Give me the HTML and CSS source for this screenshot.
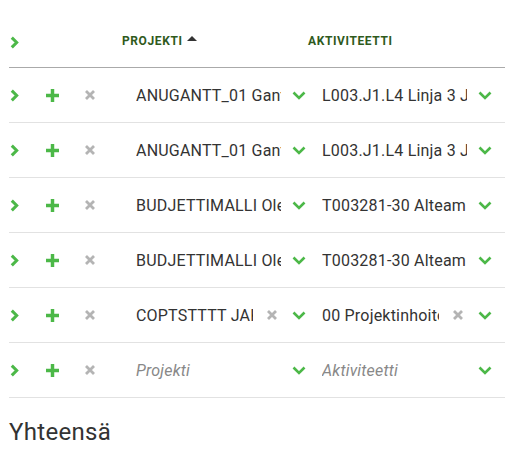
FILE: index.html
```html
<!DOCTYPE html>
<html lang="fi">
<head>
    <meta charset="UTF-8">
    <meta name="viewport" content="width=device-width, initial-scale=1.0">
    <title>Tuntikirjaus</title>
    <link rel="stylesheet" href="styles.css">
</head>
<body>

<div class="grid-wrap">
    <div class="row head">
        <div class="cell expand"><svg class="ico-right" viewBox="0 0 8 12"><path d="M1.5 1.5 L6 6 L1.5 10.5"/></svg></div>
        <div class="cell"></div>
        <div class="cell"></div>
        <div class="cell th">PROJEKTI <span class="caret"></span></div>
        <div class="cell th">AKTIVITEETTI</div>
        <div class="cell th"></div>
    </div>

    <div class="row">
        <div class="cell expand"><svg class="ico-right" viewBox="0 0 8 12"><path d="M1.5 1.5 L6 6 L1.5 10.5"/></svg></div>
        <div class="cell add"><svg class="ico-plus" viewBox="0 0 12 12"><path d="M6 0 V12 M0 6 H12"/></svg></div>
        <div class="cell del"><svg class="ico-x" viewBox="0 0 10 10"><path d="M1 1 L9 9 M9 1 L1 9"/></svg></div>
        <div class="cell sel"><span class="val">ANUGANTT_01 Gantt</span><svg class="ico-down" viewBox="0 0 14 9"><path d="M1.5 1.5 L7 7 L12.5 1.5"/></svg></div>
        <div class="cell sel"><span class="val">L003.J1.L4 Linja 3 Jakso</span><svg class="ico-down" viewBox="0 0 14 9"><path d="M1.5 1.5 L7 7 L12.5 1.5"/></svg></div>
        <div class="cell"></div>
    </div>

    <div class="row">
        <div class="cell expand"><svg class="ico-right" viewBox="0 0 8 12"><path d="M1.5 1.5 L6 6 L1.5 10.5"/></svg></div>
        <div class="cell add"><svg class="ico-plus" viewBox="0 0 12 12"><path d="M6 0 V12 M0 6 H12"/></svg></div>
        <div class="cell del"><svg class="ico-x" viewBox="0 0 10 10"><path d="M1 1 L9 9 M9 1 L1 9"/></svg></div>
        <div class="cell sel"><span class="val">ANUGANTT_01 Gantt</span><svg class="ico-down" viewBox="0 0 14 9"><path d="M1.5 1.5 L7 7 L12.5 1.5"/></svg></div>
        <div class="cell sel"><span class="val">L003.J1.L4 Linja 3 Jakso</span><svg class="ico-down" viewBox="0 0 14 9"><path d="M1.5 1.5 L7 7 L12.5 1.5"/></svg></div>
        <div class="cell"></div>
    </div>

    <div class="row">
        <div class="cell expand"><svg class="ico-right" viewBox="0 0 8 12"><path d="M1.5 1.5 L6 6 L1.5 10.5"/></svg></div>
        <div class="cell add"><svg class="ico-plus" viewBox="0 0 12 12"><path d="M6 0 V12 M0 6 H12"/></svg></div>
        <div class="cell del"><svg class="ico-x" viewBox="0 0 10 10"><path d="M1 1 L9 9 M9 1 L1 9"/></svg></div>
        <div class="cell sel"><span class="val">BUDJETTIMALLI Oletus</span><svg class="ico-down" viewBox="0 0 14 9"><path d="M1.5 1.5 L7 7 L12.5 1.5"/></svg></div>
        <div class="cell sel"><span class="val">T003281-30 Alteam Oy</span><svg class="ico-down" viewBox="0 0 14 9"><path d="M1.5 1.5 L7 7 L12.5 1.5"/></svg></div>
        <div class="cell"></div>
    </div>

    <div class="row">
        <div class="cell expand"><svg class="ico-right" viewBox="0 0 8 12"><path d="M1.5 1.5 L6 6 L1.5 10.5"/></svg></div>
        <div class="cell add"><svg class="ico-plus" viewBox="0 0 12 12"><path d="M6 0 V12 M0 6 H12"/></svg></div>
        <div class="cell del"><svg class="ico-x" viewBox="0 0 10 10"><path d="M1 1 L9 9 M9 1 L1 9"/></svg></div>
        <div class="cell sel"><span class="val">BUDJETTIMALLI Oletus</span><svg class="ico-down" viewBox="0 0 14 9"><path d="M1.5 1.5 L7 7 L12.5 1.5"/></svg></div>
        <div class="cell sel"><span class="val">T003281-30 Alteam Oy</span><svg class="ico-down" viewBox="0 0 14 9"><path d="M1.5 1.5 L7 7 L12.5 1.5"/></svg></div>
        <div class="cell"></div>
    </div>

    <div class="row">
        <div class="cell expand"><svg class="ico-right" viewBox="0 0 8 12"><path d="M1.5 1.5 L6 6 L1.5 10.5"/></svg></div>
        <div class="cell add"><svg class="ico-plus" viewBox="0 0 12 12"><path d="M6 0 V12 M0 6 H12"/></svg></div>
        <div class="cell del"><svg class="ico-x" viewBox="0 0 10 10"><path d="M1 1 L9 9 M9 1 L1 9"/></svg></div>
        <div class="cell sel"><span class="val">COPTSTTTT JAKSO</span><svg class="ico-x clear" viewBox="0 0 10 10"><path d="M1 1 L9 9 M9 1 L1 9"/></svg><svg class="ico-down" viewBox="0 0 14 9"><path d="M1.5 1.5 L7 7 L12.5 1.5"/></svg></div>
        <div class="cell sel"><span class="val">00 Projektinhoito</span><svg class="ico-x clear" viewBox="0 0 10 10"><path d="M1 1 L9 9 M9 1 L1 9"/></svg><svg class="ico-down" viewBox="0 0 14 9"><path d="M1.5 1.5 L7 7 L12.5 1.5"/></svg></div>
        <div class="cell"></div>
    </div>

    <div class="row">
        <div class="cell expand"><svg class="ico-right" viewBox="0 0 8 12"><path d="M1.5 1.5 L6 6 L1.5 10.5"/></svg></div>
        <div class="cell add"><svg class="ico-plus" viewBox="0 0 12 12"><path d="M6 0 V12 M0 6 H12"/></svg></div>
        <div class="cell del"><svg class="ico-x" viewBox="0 0 10 10"><path d="M1 1 L9 9 M9 1 L1 9"/></svg></div>
        <div class="cell sel"><span class="val ph">Projekti</span><svg class="ico-down" viewBox="0 0 14 9"><path d="M1.5 1.5 L7 7 L12.5 1.5"/></svg></div>
        <div class="cell sel"><span class="val ph">Aktiviteetti</span><svg class="ico-down" viewBox="0 0 14 9"><path d="M1.5 1.5 L7 7 L12.5 1.5"/></svg></div>
        <div class="cell"></div>
    </div>
</div>

<h2 class="total">Yhteensä</h2>

</body>
</html>
```

FILE: styles.css
```css
body {
    font-family: Roboto, "Liberation Sans", sans-serif;
    background-color: #fff;
    color: #333;
    margin: 0;
    padding: 17px 0 0 9px;
    overflow: hidden;
}
.grid-wrap {
    width: 600px;
}
.row {
    display: grid;
    grid-template-columns: 28px 36px 49px 186px 186px 1fr;
    height: 55px;
    border-bottom: 1px solid #e2e2e2;
    box-sizing: border-box;
    align-items: center;
}
.row.head {
    height: 51px;
    border-bottom: 1px solid #aaa;
}
.cell {
    display: flex;
    align-items: center;
    min-width: 0;
}
.expand {
    padding-left: 1px;
}
.add {
    padding-left: 9px;
}
.del {
    padding-left: 12px;
}
.th {
    font-size: 12px;
    font-weight: 700;
    letter-spacing: 0.6px;
    color: #2f5a1c;
    padding-bottom: 2px;
}
.caret {
    display: inline-block;
    width: 0;
    height: 0;
    margin-left: 4px;
    margin-bottom: 6px;
    border-left: 5px solid transparent;
    border-right: 5px solid transparent;
    border-bottom: 5px solid #333;
}
.sel {
    padding: 0 2px 0 14px;
    font-size: 16px;
    letter-spacing: 0.2px;
}
.val {
    flex: 1;
    white-space: nowrap;
    overflow: hidden;
    min-width: 0;
}
.val.ph {
    font-style: italic;
    color: #888;
}
svg {
    flex: none;
    fill: none;
    stroke-linecap: butt;
}
.ico-right {
    width: 9px;
    height: 13px;
    stroke: #4cb848;
    stroke-width: 2.8;
}
.ico-plus {
    width: 13px;
    height: 13px;
    stroke: #4cb848;
    stroke-width: 3.2;
}
.ico-x {
    width: 10px;
    height: 10px;
    stroke: #b4b4b4;
    stroke-width: 2.8;
}
.ico-x.clear {
    margin: 0 4px 0 14px;
}
.ico-down {
    width: 14px;
    height: 9px;
    margin-left: 11px;
    stroke: #4cb848;
    stroke-width: 2.6;
}
.total {
    font-size: 24px;
    font-weight: 400;
    letter-spacing: 0.3px;
    margin: 20px 0 0 0;
    color: #333;
}
```
